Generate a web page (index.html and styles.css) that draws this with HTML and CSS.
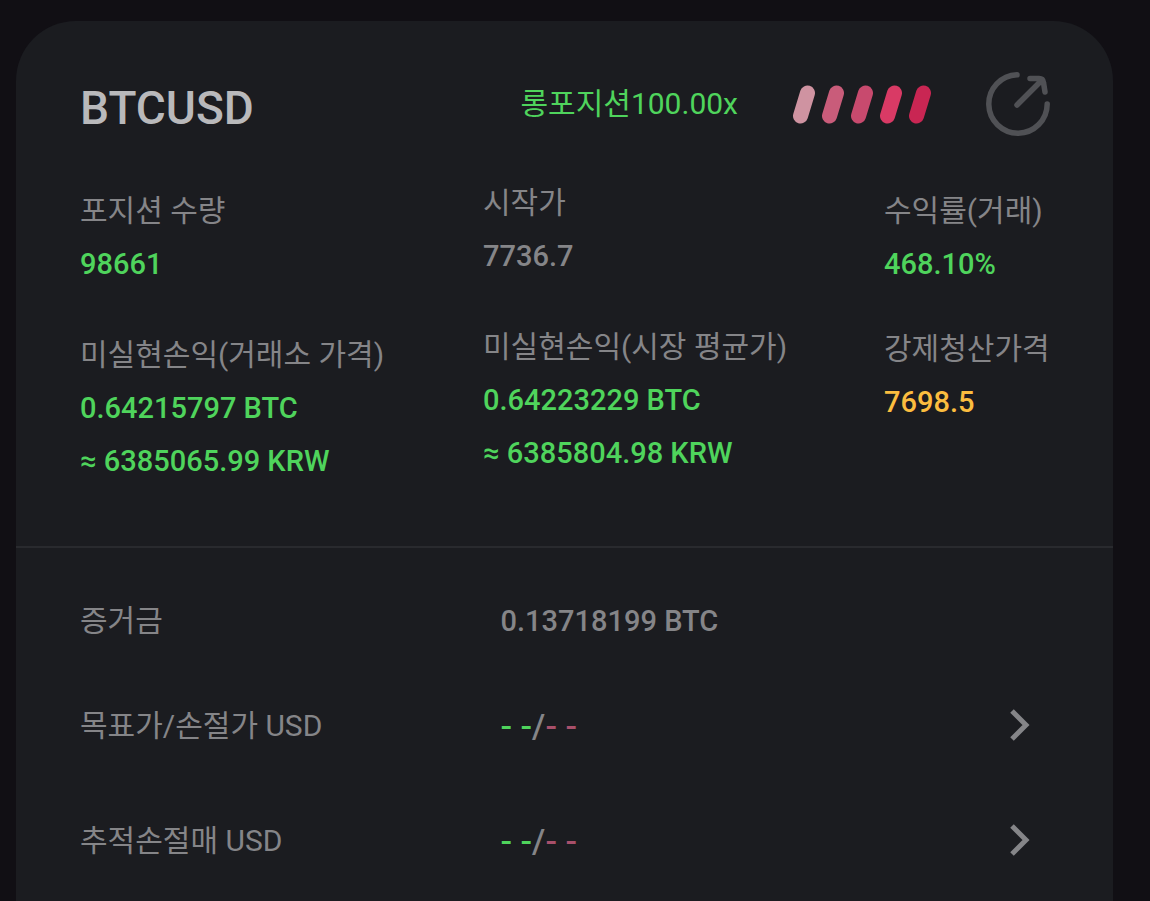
FILE: index.html
```html
<!DOCTYPE html>
<html lang="ko">
<head>
<meta charset="utf-8">
<meta name="viewport" content="width=device-width, initial-scale=1">
<title>BTCUSD</title>
<link rel="stylesheet" href="styles.css">
</head>
<body>
<main class="card">
  <header class="head">
    <h1 class="symbol">BTCUSD</h1>
    <span class="side">롱포지션100.00x</span>
    <svg class="risk" viewBox="0 0 140 40" aria-hidden="true">
      <g stroke-width="15" stroke-linecap="round">
        <path stroke="#cf93a1" d="M8.500 32 15.500 9"/>
        <path stroke="#c95c7a" d="M37.500 32 44.500 9"/>
        <path stroke="#c84a6e" d="M66.500 32 73.500 9"/>
        <path stroke="#d93a65" d="M95.500 32 102.500 9"/>
        <path stroke="#c92653" d="M124.500 32 131.500 9"/>
      </g>
    </svg>
    <button class="share" type="button" aria-label="공유">
      <svg viewBox="0 0 64 64" aria-hidden="true">
        <path d="M31 2.800A29.200 29.200 0 1 0 61.200 32"/>
        <path d="M31 33 55 9M44 6.500H53Q57 6.500 57.500 10.500L59 20"/>
      </svg>
    </button>
  </header>

  <section class="stats">
    <div class="col col-low">
      <dl class="stat"><dt>포지션 수량</dt><dd class="up">98661</dd></dl>
      <dl class="stat"><dt>미실현손익(거래소 가격)</dt><dd class="up">0.64215797 BTC</dd><dd class="up">≈ 6385065.99 KRW</dd></dl>
    </div>
    <div class="col">
      <dl class="stat"><dt>시작가</dt><dd>7736.7</dd></dl>
      <dl class="stat"><dt>미실현손익(시장 평균가)</dt><dd class="up">0.64223229 BTC</dd><dd class="up">≈ 6385804.98 KRW</dd></dl>
    </div>
    <div class="col col-low col-tight">
      <dl class="stat"><dt>수익률(거래)</dt><dd class="up">468.10%</dd></dl>
      <dl class="stat"><dt>강제청산가격</dt><dd class="warn">7698.5</dd></dl>
    </div>
  </section>

  <section class="rows">
    <div class="row row-first">
      <span>증거금</span><span class="value">0.13718199 BTC</span>
    </div>
    <button class="row" type="button">
      <span>목표가/손절가 USD</span>
      <span class="value empty"><span class="up">- -</span>/<span class="down">- -</span></span>
      <svg class="chevron" viewBox="0 0 22 36" aria-hidden="true"><path d="M3 3 17 17 3 31"/></svg>
    </button>
    <button class="row" type="button">
      <span>추적손절매 USD</span>
      <span class="value empty"><span class="up">- -</span>/<span class="down">- -</span></span>
      <svg class="chevron" viewBox="0 0 22 36" aria-hidden="true"><path d="M3 3 17 17 3 31"/></svg>
    </button>
  </section>
</main>
</body>
</html>
```
FILE: styles.css
```css
* { box-sizing: border-box; }

body {
  margin: 0;
  padding: 21px 37px 0 16px;
  min-height: 100vh;
  display: flex;
  background: #110f14;
  color: #858588;
  font: 400 30px/40px Roboto, "Noto Sans CJK KR", sans-serif;
  white-space: nowrap;
}

button {
  border: 0;
  padding: 0;
  background: none;
  color: inherit;
  font: inherit;
  text-align: left;
  cursor: pointer;
}

.card {
  flex: 1;
  min-width: 0;
  background: #1b1c20;
  border-radius: 60px 60px 0 0;
}

.head {
  display: flex;
  align-items: center;
  gap: 54px;
  padding: 51px 63px 0 64px;
}

.symbol {
  flex: 1;
  margin: 0;
  padding-top: 8px;
  color: #b9b9bb;
  font-size: 46px;
  font-weight: 500;
  line-height: 56px;
}

.side { color: #4fd45c; }

.risk {
  width: 140px;
  height: 40px;
  fill: none;
}

.share {
  width: 64px;
  height: 64px;
}

.share svg {
  display: block;
  fill: none;
  stroke: #505155;
  stroke-width: 5.5;
  stroke-linecap: round;
  stroke-linejoin: round;
}

.stats {
  display: grid;
  grid-template-columns: 403fr 401fr 165fr;
  padding: 47px 64px 65px;
}

.col {
  display: flex;
  flex-direction: column;
  gap: 51px;
  min-width: 0;
}

.col-low { padding-top: 8px; }
.col-tight { gap: 45px; }

.stat {
  display: flex;
  flex-direction: column;
  gap: 13px;
  margin: 0;
}

.stat dd {
  margin: 0;
  font-size: 29px;
  font-weight: 500;
}

.stat .up, .value .up { color: #4fd45c; }
.stat .warn { color: #fbbd3f; }
.value .down { color: #a8506b; }

.rows {
  border-top: 2px solid #292a2e;
  padding-top: 26px;
}

.row {
  display: grid;
  grid-template-columns: 421fr 509fr 22px;
  align-items: center;
  width: 100%;
  height: 115px;
  padding: 0 82px 0 64px;
}

.row-first { height: 94px; }

.value {
  font-size: 29px;
  font-weight: 500;
}

.row .empty { font-size: 34px; }

.chevron {
  width: 22px;
  height: 36px;
  fill: none;
  stroke: #858588;
  stroke-width: 5;
}
```
